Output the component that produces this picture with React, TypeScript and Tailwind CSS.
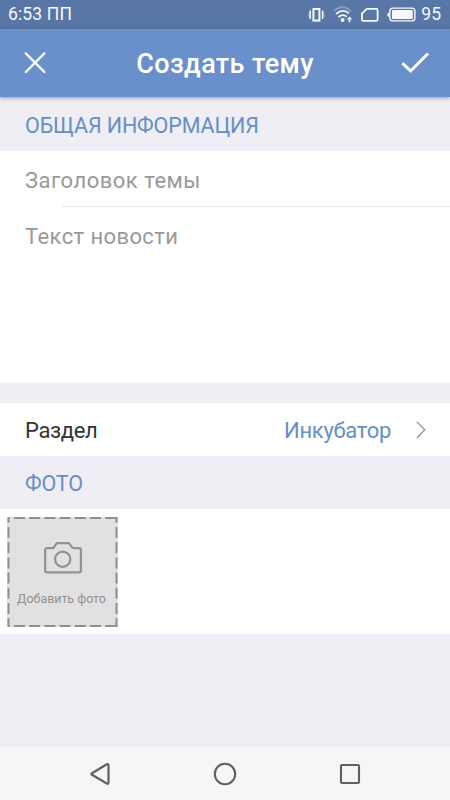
import type { ReactNode } from 'react';

function VibrateIcon() {
  return (
    <svg width="18" height="18" viewBox="0 0 18 18" fill="none" stroke="#f5f9ff">
      <rect x="6.400" y="3" width="6" height="11.600" strokeWidth="2" />
      <path d="M3.200 4.500v8.600M15.600 4.500v8.600" strokeWidth="1.500" />
      <path d="M1.900 6.500v4.600M16.900 6.500v4.600" strokeWidth="1" opacity=".45" />
    </svg>
  );
}

function WifiIcon() {
  return (
    <svg width="20" height="18" viewBox="0 0 20 18" fill="none" stroke="#f5f9ff" strokeWidth="1.9">
      <path d="M.9 5.200C6-.1 13-.1 18 5.200" opacity=".3" />
      <path d="M3.100 8C7.200 4 12.400 4 16 7.400" />
      <path d="M5.500 11.100c2.700-2.500 5.600-2.500 8.200-.4" />
      <circle cx="9.600" cy="14" r="1.900" fill="#f5f9ff" stroke="none" />
      <path d="M16.500 16.200v-4.600" strokeWidth="1.500" />
      <path d="M13.900 13.600L16.500 10.600L19.100 13.600Z" fill="#f5f9ff" stroke="none" />
    </svg>
  );
}

function SimIcon() {
  return (
    <svg width="18" height="14" viewBox="0 0 18 14" fill="none" stroke="#f5f9ff" strokeWidth="1.800">
      <path d="M5.800.9H15.400Q16.600.9 16.600 2.100V11.600Q16.600 12.800 15.400 12.800H2Q.9 12.800.9 11.600V5.600Z" strokeLinejoin="round" />
    </svg>
  );
}

function BatteryIcon() {
  return (
    <svg width="30" height="16" viewBox="0 0 30 16" fill="none">
      <rect x="2.900" y="1.100" width="25" height="12.800" rx="3" stroke="#f5f9ff" strokeWidth="1.400" />
      <rect x="5" y="3" width="20.800" height="9" rx="1" fill="#f5f9ff" />
      <path d="M2.600 5v5.600L.4 9V6.600Z" fill="#f5f9ff" />
    </svg>
  );
}

function SectionTitle({ children, className }: { children: ReactNode; className: string }) {
  return (
    <h2 className={`flex items-center bg-[#efeef4] pl-[25px] text-[21.5px] font-normal tracking-[-0.12px] text-[#668fc7] ${className}`}>
      {children}
    </h2>
  );
}

export default function App() {
  return (
    <div className="flex h-[800px] w-[450px] flex-col overflow-hidden bg-[#efeef4] font-['Roboto',sans-serif] whitespace-nowrap">
      {/* Status bar */}
      <div className="flex h-[29px] shrink-0 items-center bg-[#5876a6] pl-[8px] text-[17.5px] text-[#f5f9ff]">
        <span className="tracking-[0.15px]">6:53 ПП</span>
        <div className="ml-auto flex items-center pr-[9px]">
          <VibrateIcon />
          <div className="ml-[8px]"><WifiIcon /></div>
          <div className="ml-[8px]"><SimIcon /></div>
          <div className="ml-[8px]"><BatteryIcon /></div>
          <span className="ml-[4px]">95</span>
        </div>
      </div>

      {/* Header */}
      <header className="relative z-10 flex h-[68px] shrink-0 items-center justify-between bg-[#6990cb] pr-[20px] pl-[23px] text-white shadow-[0_1px_4px_rgba(60,60,90,0.5)]">
        <svg width="24" height="24" viewBox="0 0 24 24" fill="none" stroke="#f8fcff" strokeWidth="2.400" strokeLinecap="round">
          <path d="M2.800 2.400L21.400 21M21.400 2.400L2.800 21" />
        </svg>
        <h1 className="pt-[2px] pl-[3px] text-[27px] font-medium tracking-[0.35px]">Создать тему</h1>
        <svg width="30" height="24" viewBox="0 0 30 24" fill="none" stroke="#f8fcff" strokeWidth="3">
          <path d="M2.400 12.200L10.600 20L28 2.500" />
        </svg>
      </header>

      <SectionTitle className="h-[54px] shrink-0 pt-[4px]">ОБЩАЯ ИНФОРМАЦИЯ</SectionTitle>
      <div className="h-[232px] shrink-0 bg-white text-[22px] text-[#999]">
        <div className="flex h-[55px] items-center pt-[3px] pl-[25px] tracking-[0.5px]">Заголовок темы</div>
        <div className="ml-[62px] h-[1px] bg-[#e6e6e6]" />
        <div className="flex h-[58px] items-center pt-px pl-[25px] tracking-[0.4px]">Текст новости</div>
      </div>

      {/* Category row */}
      <div className="mt-[20px] flex h-[53px] shrink-0 items-center bg-white pr-[24px] pl-[25px] text-[22px]">
        <span className="pt-[2px] tracking-[-0.35px] text-[#333]">Раздел</span>
        <span className="ml-auto pt-[2px] tracking-[-0.3px] text-[#668fc7]">Инкубатор</span>
        <svg className="ml-[25px]" width="10" height="18" viewBox="0 0 10 18" fill="none" stroke="#8a8a8a" strokeWidth="1.200">
          <path d="M.8.8L8.800 8.800L.8 17" />
        </svg>
      </div>

      <SectionTitle className="h-[53px] shrink-0 pt-[3px]">ФОТО</SectionTitle>
      <div className="h-[125px] shrink-0 bg-white pt-[8px] pl-[7px]">
        <div className="relative flex h-[110px] w-[111px] flex-col items-center bg-[#e1e1e1]">
          <svg className="absolute inset-0" width="111" height="110" viewBox="0 0 111 110" fill="none" stroke="#8f8f8f" strokeWidth="2">
            <path d="M1 1H111M1 109H111" strokeDasharray="11 4.200" strokeDashoffset="9.200" />
            <path d="M1.500 0V110M109.500 0V110" strokeDasharray="11 4.200" strokeDashoffset="5.200" />
          </svg>
          <svg className="mt-[25px]" width="38" height="32" viewBox="0 0 38 32" fill="none" stroke="#929292" strokeWidth="2.200" strokeLinejoin="round">
            <path d="M3 6.200H8.300Q9.400 6.200 10 5.200L12 2.200Q12.700 1.200 13.800 1.200H24Q25.100 1.200 25.800 2.200L27.900 5.200Q28.600 6.200 29.700 6.200H35Q36.900 6.200 36.900 8.100V28.400Q36.900 30.300 35 30.300H3Q1.100 30.300 1.100 28.400V8.100Q1.100 6.200 3 6.200Z" />
            <circle cx="18.700" cy="17.200" r="7.600" />
          </svg>
          <span className="mt-[17px] -ml-[2px] text-[12.5px] leading-[16px] tracking-[-0.05px] text-[#929292]">Добавить фото</span>
        </div>
      </div>

      {/* Navigation bar */}
      <nav className="mt-auto flex h-[53px] shrink-0 items-center justify-between bg-[#f6f6f6] pr-[89px] pl-[89px]">
        <svg width="22" height="24" viewBox="0 0 22 24" fill="none" stroke="#606060" strokeWidth="2.200" strokeLinejoin="round">
          <path d="M3 12.800Q1.800 12 3 11.200L17.800 2.300Q19.500 1.500 19.500 3.200V20.600Q19.500 22.300 17.800 21.500Z" />
        </svg>
        <svg width="24" height="24" viewBox="0 0 24 24" fill="none" stroke="#606060" strokeWidth="2.100">
          <circle cx="12" cy="12" r="10.200" />
        </svg>
        <svg width="22" height="22" viewBox="0 0 22 22" fill="none" stroke="#606060" strokeWidth="2.100">
          <rect x="2" y="2" width="18" height="18" rx="1" />
        </svg>
      </nav>
    </div>
  );
}
